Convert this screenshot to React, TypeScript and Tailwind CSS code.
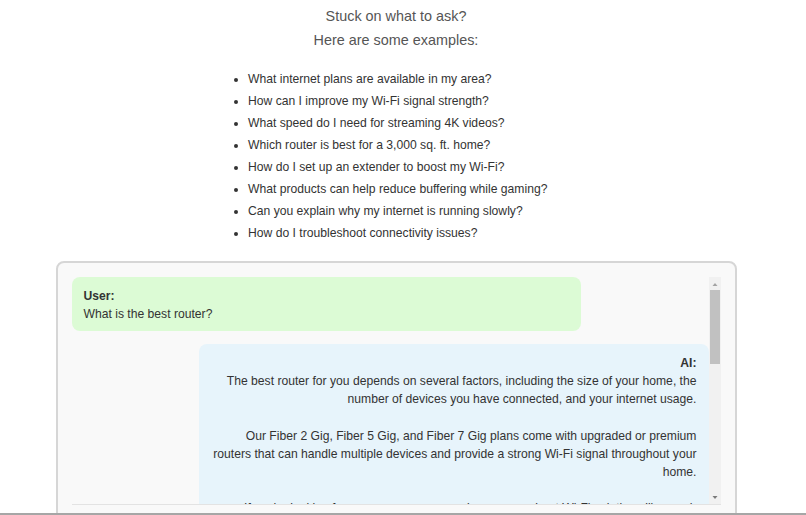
const examples = [
  "What internet plans are available in my area?",
  "How can I improve my Wi-Fi signal strength?",
  "What speed do I need for streaming 4K videos?",
  "Which router is best for a 3,000 sq. ft. home?",
  "How do I set up an extender to boost my Wi-Fi?",
  "What products can help reduce buffering while gaming?",
  "Can you explain why my internet is running slowly?",
  "How do I troubleshoot connectivity issues?",
];

const aiParagraphs = [
  "The best router for you depends on several factors, including the size of your home, the number of devices you have connected, and your internet usage.",
  "Our Fiber 2 Gig, Fiber 5 Gig, and Fiber 7 Gig plans come with upgraded or premium routers that can handle multiple devices and provide a strong Wi-Fi signal throughout your home.",
  "If you're looking for even more coverage, learn more about Wi-Fi solutions like mesh extenders you may want to consider for larger homes.",
];

function ScrollBar() {
  return (
    <div className="flex w-[12px] shrink-0 flex-col items-center bg-[#f1f1f1]">
      <svg width="8" height="13" viewBox="0 0 8 13" className="shrink-0">
        <path d="M1.5 9 L4 6 L6.5 9 Z" fill="#a3a3a3" />
      </svg>
      <div className="h-[74px] w-[10px] bg-[#c1c1c1]" />
      <div className="flex-1" />
      <svg width="8" height="13" viewBox="0 0 8 13" className="shrink-0">
        <path d="M1.5 5 L4 8 L6.5 5 Z" fill="#7a7a7a" />
      </svg>
    </div>
  );
}

export default function App() {
  return (
    <div className="h-[515px] overflow-hidden bg-white font-['Liberation_Sans',Arial,sans-serif]">
      <div className="w-[792px]">
        <div className="pt-[4px] text-center text-[14.4px] leading-[24px] text-[#555]">
          <div>Stuck on what to ask?</div>
          <div>Here are some examples:</div>
        </div>

        <ul className="mt-[16px] list-disc pl-[248px] text-[12.15px] leading-[22px] text-[#333] marker:text-[#333]">
          {examples.map((q) => (
            <li key={q}>{q}</li>
          ))}
        </ul>

        <div className="mx-auto mt-[17px] w-[681px] rounded-[8px] border-2 border-[#d6d6d6] bg-[#f9f9f9] px-[14px] pt-[14px]">
          <div className="flex h-[227px] overflow-hidden">
            <div className="flex flex-1 flex-col gap-[13px] overflow-hidden text-[12.15px] leading-[18px] text-[#333]">
              <div className="w-[80%] shrink-0 rounded-[8px] bg-[#dcfbd5] px-[12px] pt-[10px] pb-[8px]">
                <div className="font-bold">User:</div>
                <div>What is the best router?</div>
              </div>
              <div className="ml-auto w-[80%] shrink-0 rounded-[8px] bg-[#e7f4fb] px-[12px] pt-[10px] pb-[8px] text-right">
                <div className="font-bold">AI:</div>
                {aiParagraphs.map((p, i) => (
                  <p key={i} className={i === 0 ? "" : "mt-[18.5px]"}>
                    {p}
                  </p>
                ))}
              </div>
            </div>
            <ScrollBar />
          </div>
          <div className="h-[20px] border-t border-[#e3e3e3]" />
        </div>
      </div>
      <div className="fixed inset-x-0 bottom-0 h-[2px] bg-[#a6a6a6]" />
    </div>
  );
}
